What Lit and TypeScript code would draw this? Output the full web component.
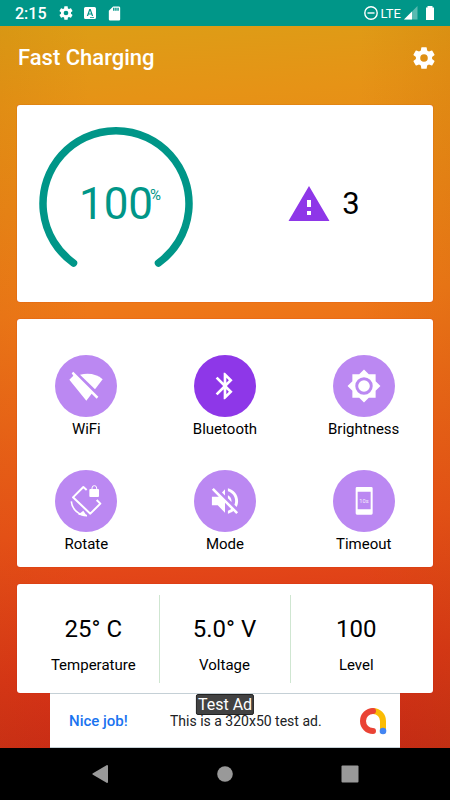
import { LitElement, html, css, svg } from "lit";
import { customElement } from "lit/decorators.js";
import { classMap } from "lit/directives/class-map.js";

const gear = svg`<path fill-rule="evenodd" d="M19.43 12.98c.04-.32.07-.64.07-.98s-.03-.66-.07-.98l2.11-1.65c.19-.15.24-.42.12-.64l-2-3.46c-.12-.22-.39-.3-.61-.22l-2.49 1c-.52-.4-1.08-.73-1.69-.98l-.38-2.65C14.46 2.18 14.25 2 14 2h-4c-.25 0-.46.18-.49.42l-.38 2.65c-.61.25-1.17.59-1.69.98l-2.49-1c-.23-.09-.49 0-.61.22l-2 3.46c-.13.22-.07.49.12.64l2.11 1.65c-.04.32-.07.65-.07.98s.03.66.07.98l-2.11 1.65c-.19.15-.24.42-.12.64l2 3.46c.12.22.39.3.61.22l2.49-1c.52.4 1.08.73 1.69.98l.38 2.65c.03.24.24.42.49.42h4c.25 0 .46-.18.49-.42l.38-2.65c.61-.25 1.17-.59 1.69-.98l2.49 1c.23.09.49 0 .61-.22l2-3.46c.12-.22.07-.49-.12-.64zM12 15.5a3.5 3.5 0 1 1 0-7 3.5 3.5 0 0 1 0 7z"/>`;

const tiles = [
  {
    name: "WiFi",
    on: false,
    box: "-48 -48 96 96",
    icon: svg`<path d="M-50-19-38-31-43-38-38-43 37 32 32 38 17 23 1 44z"/><path d="M-18-34Q24-43 50-20L27 10z"/>`,
  },
  {
    name: "Bluetooth",
    on: true,
    box: "0 0 24 24",
    icon: svg`<path d="M17.71 7.71 12 2h-1v7.59L6.41 5 5 6.41 10.59 12 5 17.59 6.41 19 11 14.41V22h1l5.71-5.71-4.3-4.29 4.3-4.29zM13 5.83l1.88 1.88L13 9.59V5.83zm1.88 10.46L13 18.17v-3.76l1.88 1.88z"/>`,
  },
  {
    name: "Brightness",
    on: false,
    box: "1 1 22 22",
    icon: svg`<path d="M20 8.69V4h-4.69L12 .69 8.69 4H4v4.69L.69 12 4 15.31V20h4.69L12 23.31 15.31 20H20v-4.69L23.31 12 20 8.69zM12 18a6 6 0 1 1 0-12 6 6 0 0 1 0 12zm0-10a4 4 0 1 0 0 8 4 4 0 0 0 0-8z"/>`,
  },
  {
    name: "Rotate",
    on: false,
    box: "-48 -48 96 96",
    icon: svg`<g fill="none" stroke="#fff" stroke-width="6" stroke-linejoin="round"><path d="M2-33-8-42-39-11 13 38 43 8 32-3"/><path stroke-width="5" d="M-44 1C-42 25-22 43 3 44"/><path stroke-width="3" d="M18-35v-4a7 7 0 0 1 14 0v4"/></g><path d="M3 46-24 41-8 29z"/><rect x="10" y="-36" width="29" height="24" rx="3"/>`,
  },
  {
    name: "Mode",
    on: false,
    box: "1 1 22 22",
    icon: svg`<path d="M16.5 12c0-1.77-1.02-3.29-2.5-4.03v2.21l2.45 2.45c.03-.2.05-.41.05-.63zm2.5 0c0 .94-.2 1.82-.54 2.64l1.51 1.51C20.63 14.91 21 13.5 21 12c0-4.28-2.99-7.86-7-8.77v2.06c2.89.86 5 3.54 5 6.71zM4.27 3 3 4.27 7.73 9H3v6h4l5 5v-6.73l4.25 4.25c-.67.52-1.42.93-2.25 1.18v2.06c1.38-.31 2.63-.95 3.69-1.81L19.73 21 21 19.73l-9-9L4.27 3zM12 4 9.91 6.09 12 8.18V4z"/>`,
  },
  {
    name: "Timeout",
    on: false,
    box: "-48 -48 96 96",
    icon: svg`<path fill-rule="evenodd" d="M-21-42h43q4 0 4 4v75q0 4-4 4h-43q-4 0-4-4v-75q0-4 4-4zM-19-28v53h39v-53z"/><text x="0" y="6" font-size="17" text-anchor="middle" opacity=".85">10s</text>`,
  },
];

const readings = [
  ["25° C", "Temperature"],
  ["5.0° V", "Voltage"],
  ["100", "Level"],
];

@customElement("app-root")
export class AppRoot extends LitElement {
  static styles = css`
    :host {
      display: flex;
      flex-direction: column;
      min-height: 100vh;
      font-family: Roboto, "Noto Sans", sans-serif;
      color: #000;
      background:
        linear-gradient(90deg, rgba(180, 90, 0, 0.1), transparent 20%, transparent 80%, rgba(180, 90, 0, 0.14)),
        linear-gradient(176deg, #dc9e16 3%, #e69316 13%, #ee7818 38%, #e84f18 65%, #d73217 82%, #c42816 94%);
    }
    * { box-sizing: border-box; }
    svg { display: block; fill: currentColor; overflow: visible; }
    button {
      border: 0;
      padding: 0;
      background: none;
      color: inherit;
      font: inherit;
      cursor: pointer;
    }
    h1, p, dl, dd { margin: 0; }

    .status {
      display: flex;
      align-items: center;
      height: 26px;
      padding: 0 13px 0 15px;
      background: #009688;
      color: #fff;
      font-size: 16px;
      font-weight: 500;
    }
    .clock { margin-right: 11px; }
    .notices { display: flex; align-items: center; gap: 8px; flex: 1; }
    .signals { display: flex; align-items: center; gap: 3px; }
    .lte { font-size: 13px; font-weight: 400; }
    .cell { margin-right: 2px; }

    .bar {
      display: flex;
      align-items: center;
      justify-content: space-between;
      height: 64px;
      padding: 0 13px 0 18px;
      color: #fff;
    }
    .title { font-size: 22px; font-weight: 500; line-height: 28px; }

    .content {
      flex: 1;
      display: flex;
      flex-direction: column;
      gap: 17px;
      padding: 15px 17px 0;
    }
    .card {
      background: #fff;
      border-radius: 3px;
      box-shadow: 0 0 1px rgba(190, 0, 0, 0.7);
    }
    .battery { display: grid; grid-template-columns: 198px 1fr; height: 197px; }
    .gauge { display: grid; place-items: center; }
    .gauge svg { width: 154px; height: 154px; }
    .gauge > * { grid-area: 1 / 1; }
    .track { fill: none; stroke: #009688; stroke-width: 7.5; stroke-linecap: round; }
    .percent {
      position: relative;
      color: #009688;
      font-size: 44px;
      line-height: 52px;
    }
    .unit {
      position: absolute;
      right: -8px;
      top: 8px;
      font-size: 15px;
      line-height: 18px;
    }
    .alert {
      display: flex;
      align-items: center;
      justify-content: center;
      gap: 12px;
      font-size: 31px;
    }
    .warn { color: #8e37e8; }

    .toggles {
      display: grid;
      grid-template-columns: repeat(3, 1fr);
      row-gap: 31px;
      padding: 36px 0 13px;
    }
    .toggle {
      display: flex;
      flex-direction: column;
      align-items: center;
      gap: 2px;
      font-size: 15px;
      line-height: 20px;
    }
    .disc {
      display: grid;
      place-items: center;
      width: 62px;
      height: 62px;
      border-radius: 50%;
      background: #bb88f2;
      color: #fff;
    }
    .disc.on { background: #8e37e8; }

    .readings {
      display: grid;
      grid-template-columns: 1fr 131px 1fr;
      padding: 11px 0 10px;
    }
    .reading {
      display: flex;
      flex-direction: column-reverse;
      justify-content: flex-end;
      align-items: center;
      gap: 10px;
      height: 88px;
      padding-top: 18px;
      border-right: 1px solid #cfe6d1;
    }
    .reading:first-child { padding-left: 11px; }
    .reading:last-child { padding-right: 11px; border-right: 0; }
    .value { font-size: 24px; line-height: 32px; }
    .label { font-size: 15px; line-height: 20px; }

    .ad {
      position: relative;
      display: flex;
      align-items: center;
      align-self: center;
      width: 350px;
      max-width: 100%;
      height: 55px;
      padding: 0 13px 0 19px;
      background: #fff;
      border: 1px solid #c5d0d6;
      border-width: 1px 0;
      color: #202124;
      text-decoration: none;
      font-size: 14px;
    }
    .job { width: 101px; color: #1a73f0; font-size: 15px; font-weight: 500; }
    .copy { flex: 1; white-space: nowrap; }
    .tag {
      position: absolute;
      top: 0;
      left: 50%;
      transform: translateX(-50%);
      padding: 0 1px;
      border: 1px solid #222;
      border-radius: 2px;
      background: #424242;
      color: #fff;
      font-size: 16px;
      line-height: 19px;
      white-space: nowrap;
    }

    .nav {
      display: grid;
      grid-template-columns: repeat(3, 125px);
      justify-content: center;
      align-items: center;
      justify-items: center;
      height: 52px;
      background: #000;
      color: #999;
    }
  `;

  render() {
    return html`
      <header class="status">
        <span class="clock">2:15</span>
        <div class="notices">
          <svg width="16" height="16" viewBox="0 0 24 24">${gear}</svg>
          <svg width="16" height="16" viewBox="0 0 16 16">
            <path fill-rule="evenodd" d="M3.500 2h9Q14 2 14 3.500v9Q14 14 12.500 14h-9Q2 14 2 12.500v-9Q2 2 3.500 2zM7.300 4 4.800 11h1.300l.5-1.500h2.800L9.900 11h1.300L8.700 4zM8 5.600 9 8.400H7zM8 12v.8h4V12z"/>
          </svg>
          <svg width="17" height="17" viewBox="0 0 24 24">
            <path fill-rule="evenodd" d="M18 2h-8L4 8v12c0 1.100.9 2 2 2h12c1.100 0 2-.9 2-2V4c0-1.100-.9-2-2-2zm-6 6h-2V4h2zm3 0h-2V4h2zm3 0h-2V4h2z"/>
          </svg>
        </div>
        <div class="signals">
          <svg width="14" height="14" viewBox="0 0 14 14">
            <circle cx="7" cy="7" r="6.200" fill="none" stroke="#fff" stroke-width="1.400"/>
            <path d="M3.500 6.300h7v1.400h-7z"/>
          </svg>
          <span class="lte">LTE</span>
          <svg class="cell" width="14" height="14" viewBox="0 0 14 14">
            <path opacity=".35" d="M0 13.500 13.500 0v13.500z"/>
            <path d="M0 13.500 8 5.500v8z"/>
          </svg>
          <svg width="14" height="16" viewBox="0 0 14 16">
            <path d="M4.500 1h5v1.500H11V15H3V2.500h1.500z"/>
          </svg>
        </div>
      </header>

      <div class="bar">
        <h1 class="title">Fast Charging</h1>
        <button aria-label="Settings">
          <svg width="26" height="26" viewBox="0 0 24 24">${gear}</svg>
        </button>
      </div>

      <main class="content">
        <section class="card battery">
          <div class="gauge">
            <svg viewBox="0 0 154 154">
              <path class="track" d="M34.500 136A73 73 0 1 1 119.500 136"/>
            </svg>
            <p class="percent">100<span class="unit">%</span></p>
          </div>
          <div class="alert">
            <svg class="warn" width="42" height="36" viewBox="0 0 42 36">
              <path fill-rule="evenodd" d="M21 0 41.500 35H.5zM19 14v7h4v-7zM19 25v4h4v-4z"/>
            </svg>
            <span>3</span>
          </div>
        </section>

        <section class="card toggles">
          ${tiles.map(
            (t) => html`<button class="toggle" aria-pressed=${t.on ? "true" : "false"}>
              <span class=${classMap({ disc: true, on: t.on })}>
                <svg width="32" height="32" viewBox=${t.box}>${t.icon}</svg>
              </span>
              <span>${t.name}</span>
            </button>`
          )}
        </section>

        <dl class="card readings">
          ${readings.map(
            ([value, label]) => html`<div class="reading">
              <dt class="label">${label}</dt>
              <dd class="value">${value}</dd>
            </div>`
          )}
        </dl>
      </main>

      <a class="ad" href="#ad">
        <span class="job">Nice job!</span>
        <span class="copy">This is a 320x50 test ad.</span>
        <svg width="28" height="28" viewBox="0 0 28 28">
          <g fill="none" stroke-width="6" stroke-linecap="round">
            <path stroke="#fbbc04" d="M14 4a10 10 0 0 1 10 10v10"/>
            <path stroke="#ea4335" d="M14 4a10 10 0 0 0 0 20"/>
          </g>
          <circle cx="24" cy="24" r="3.300" fill="#4285f4"/>
        </svg>
        <span class="tag">Test Ad</span>
      </a>

      <nav class="nav">
        <button aria-label="Back">
          <svg width="16" height="18" viewBox="0 0 16 18"><path d="M15 0Q16 0 16 1v16q0 1-1 1L.5 9.500v-1z"/></svg>
        </button>
        <button aria-label="Home">
          <svg width="16" height="16" viewBox="0 0 16 16"><circle cx="8" cy="8" r="7.800"/></svg>
        </button>
        <button aria-label="Recents">
          <svg width="18" height="18" viewBox="0 0 18 18"><rect x=".5" y=".5" width="17" height="17" rx="1"/></svg>
        </button>
      </nav>
    `;
  }
}
